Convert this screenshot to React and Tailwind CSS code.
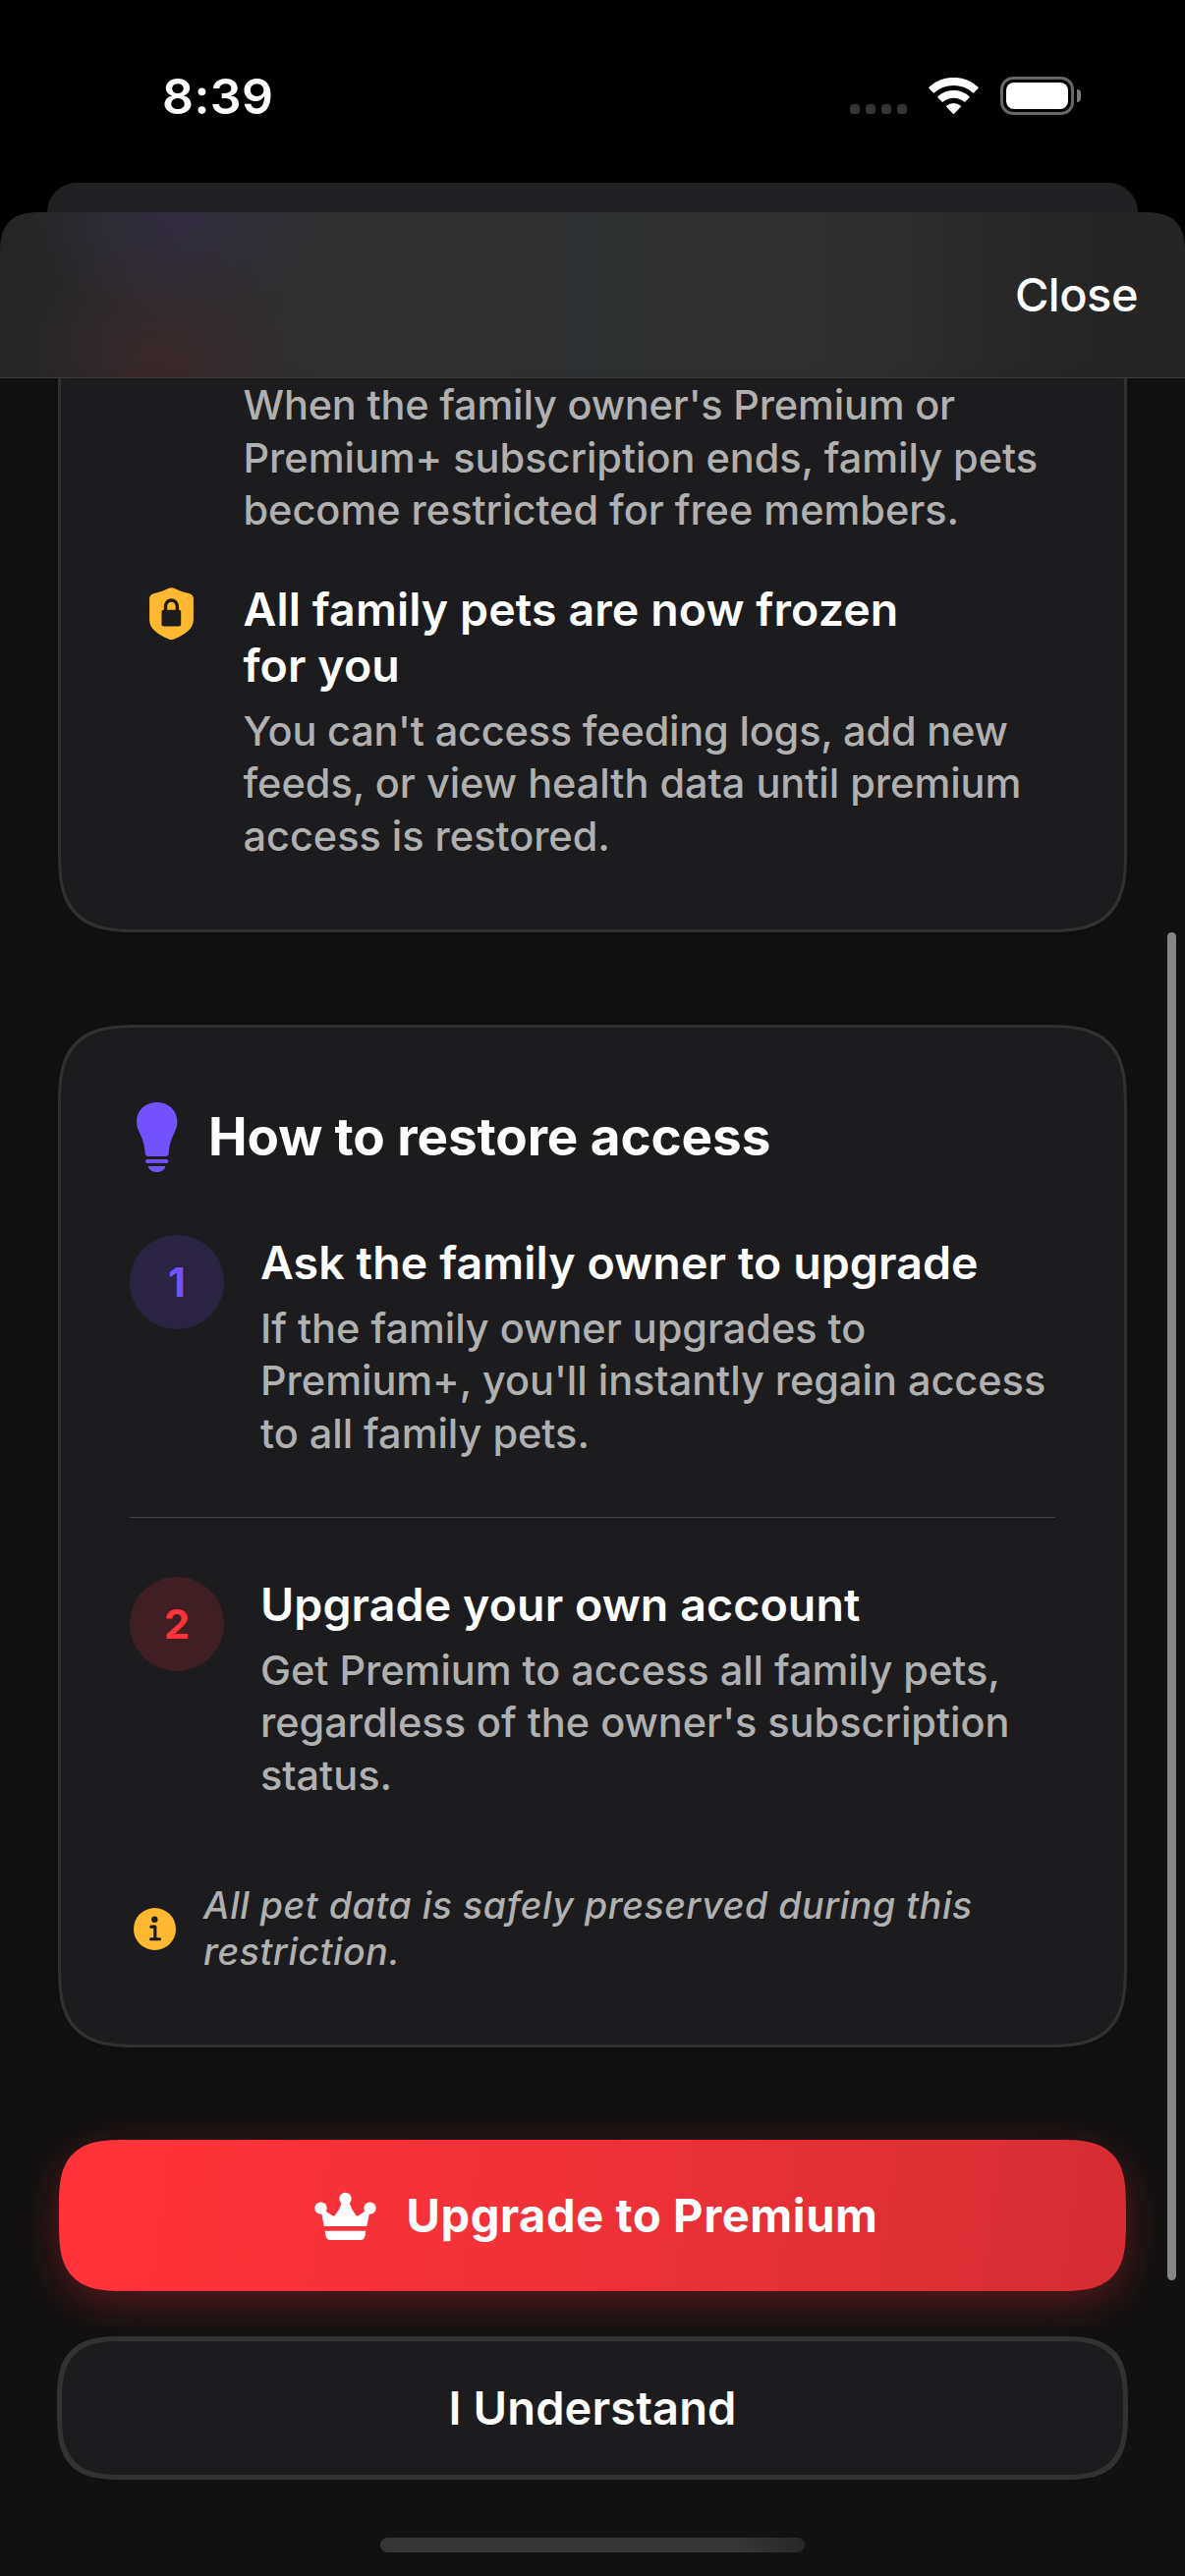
import React from "react";

function WifiIcon() {
  return (
    <svg width="51" height="38" viewBox="0 0 51 38" fill="#fff">
      <path d="M0.6 9.4A37.3 37.3 0 0 1 50.4 9.4Q51.2 10.1 50.6 10.8L46.1 15.4Q45.5 15.9 44.9 15.3A29.3 29.3 0 0 0 6.1 15.3Q5.5 15.9 4.9 15.4L0.4 10.8Q-0.2 10.1 0.6 9.4Z" />
      <path d="M9.6 18.9A24.3 24.3 0 0 1 41.4 18.9Q42.2 19.6 41.6 20.3L37.5 24.6Q36.9 25.2 36.2 24.6A16.7 16.7 0 0 0 14.8 24.6Q14.1 25.2 13.5 24.6L9.4 20.3Q8.8 19.6 9.6 18.9Z" />
      <path d="M18.4 28.5A11.3 11.3 0 0 1 32.6 28.5Q33.4 29.1 32.8 29.8L26.1 36.8Q25.5 37.5 24.9 36.8L18.2 29.8Q17.6 29.1 18.4 28.5Z" />
    </svg>
  );
}

function ShieldLockIcon() {
  return (
    <svg width="45" height="53.5" viewBox="0 0 134 160">
      <path
        fill="#ffb830"
        d="M57 3Q67 -2 77 3C92 11 108 15 122 19Q134 23 134 34V98C134 126 108 143 73 158Q67 161 61 158C26 143 0 126 0 98V34Q0 23 12 19C26 15 42 11 57 3Z"
      />
      <rect x="37" y="68" width="59" height="50" rx="6" fill="#1c1c1e" />
      <path d="M49 72V57A17.5 18 0 0 1 84.500 57V72" fill="none" stroke="#1c1c1e" strokeWidth="10" />
    </svg>
  );
}

function BulbIcon() {
  return (
    <svg width="41.500" height="71" viewBox="0 0 124 213" fill="#7351ff">
      <path d="M62 0C97 0 124 25 124 59C124 93 101 100 98 157Q97 165 90 165H34Q27 165 26 157C23 100 0 93 0 59C0 25 27 0 62 0Z" />
      <rect x="27" y="174" width="70" height="12" rx="6" />
      <path d="M35 195H88C86 206 76 213 61.500 213C47 213 37 206 35 195Z" />
    </svg>
  );
}

function InfoIcon() {
  return (
    <svg width="43" height="43" viewBox="0 0 128 128">
      <circle cx="64" cy="64" r="64" fill="#ffb830" />
      <circle cx="63.500" cy="35" r="9.500" fill="#1c1c1e" />
      <path
        d="M53 57H65V94M52 94.500H79"
        fill="none"
        stroke="#1c1c1e"
        strokeWidth="9.500"
        strokeLinecap="round"
        strokeLinejoin="round"
      />
    </svg>
  );
}

function CrownIcon() {
  return (
    <svg width="70" height="50" viewBox="-22 -5 210 150" fill="#fff">
      <circle cx="18.500" cy="48" r="18.500" />
      <circle cx="93.500" cy="18.500" r="18.500" />
      <circle cx="168.500" cy="48" r="18.500" />
      <path d="M20 60L28.500 103H159L167.500 60L152 58L133 71Q129 73 126 69Q112 52 105 30H83Q76 52 62 69Q58 73 54 71L35 58Z" />
      <path d="M31 117H156C154 137 150 145 139 145H48C37 145 33 137 31 117Z" />
    </svg>
  );
}

function StatusBar() {
  return (
    <div className="flex h-[186px] items-start justify-between pl-[165px] pr-[106px]">
      <div className="mt-[68px] text-[50px] leading-[61px] font-semibold tracking-[0.4px]">8:39</div>
      <div className="mt-[78px] flex h-[39px] items-center">
        <div className="mr-[22px] flex gap-1.5 self-end pb-px">
          <span className="size-2.5 rounded-[3.5px] bg-[#343434]" />
          <span className="size-2.5 rounded-[3.5px] bg-[#343434]" />
          <span className="size-2.5 rounded-[3.5px] bg-[#343434]" />
          <span className="size-2.5 rounded-[3.5px] bg-[#343434]" />
        </div>
        <WifiIcon />
        <div className="ml-[22px] h-[39px] w-[75px] rounded-[13px] border-[3px] border-[#666] p-[3px]">
          <div className="h-full rounded-[8px] bg-white" />
        </div>
        <div className="ml-[3px] h-[13px] w-1 rounded-r-full bg-[#7a7a7a]" />
      </div>
    </div>
  );
}

function Lines({ lines, className }) {
  return (
    <p className={className}>
      {lines.map((line) => (
        <span key={line} className="block whitespace-nowrap">
          {line}
        </span>
      ))}
    </p>
  );
}

const BODY = "text-[41.5px] leading-[53.5px] font-medium tracking-[-0.04px] text-[#b0b0b0]";
const TITLE = "text-[46.5px] leading-[57.5px] font-semibold tracking-[0.1px]";

function Step({ number, tone, title, lines }) {
  return (
    <div className="flex gap-9">
      <div className={`flex size-24 shrink-0 items-center justify-center rounded-full text-[41.5px] font-bold ${tone}`}>
        {number}
      </div>
      <div className="pl-px">
        <Lines lines={[title]} className={TITLE} />
        <Lines lines={lines} className={`mt-[11px] -mb-px ${BODY}`} />
      </div>
    </div>
  );
}

export default function App() {
  return (
    <div className="relative h-[2622px] w-[1206px] overflow-hidden bg-black font-[Inter,sans-serif] text-white">
      <StatusBar />
      <div className="mx-12 h-[30px] rounded-t-[30px] bg-[#202022]" />

      <div className="h-[2406px] overflow-hidden rounded-t-[32px] bg-[#111111] supports-[corner-shape:squircle]:rounded-t-[44px] supports-[corner-shape:squircle]:[corner-shape:superellipse(1.5)]">
        <header className="flex h-[169px] items-center justify-end border-b border-[#3c3c3d] bg-[radial-gradient(ellipse_150px_110px_at_180px_0px,rgba(53,46,72,0.75),rgba(53,46,72,0.35)_50%,transparent),radial-gradient(ellipse_150px_150px_at_165px_169px,rgba(62,38,42,0.8),rgba(62,38,42,0.35)_50%,transparent),linear-gradient(90deg,#242524_0%,#272728_6%,#2e2e2f_17%,#323233_28%,#303132_50%,#313131_68%,#2d2d2e_76%,#282829_84%,#252525_92%,#242524_100%)] pr-12">
          <button className="-mt-0.5 text-[47px] leading-[57px] font-medium tracking-[-0.5px]">Close</button>
        </header>

        <main className="px-[59px]">
          <section className="rounded-b-[61px] border-x-[3px] border-b-[3px] border-[#313132] bg-[#1c1c1e] px-[70px] pt-px pb-[68px] shadow-[0_8px_24px_rgba(0,0,0,0.1)] supports-[corner-shape:squircle]:rounded-b-[86px] supports-[corner-shape:squircle]:[corner-shape:superellipse(1.6)]">
            <Lines
              className={`ml-[115.5px] ${BODY}`}
              lines={[
                <span className="tracking-[-0.2px]">When the family owner's Premium or</span>,
                "Premium+ subscription ends, family pets",
                "become restricted for free members.",
              ]}
            />
            <div className="mt-[45px] flex gap-[30px]">
              <div className="mt-1.5 flex w-[85px] shrink-0 justify-center">
                <ShieldLockIcon />
              </div>
              <div className="pl-[0.5px]">
                <Lines className={TITLE} lines={["All family pets are now frozen", "for you"]} />
                <Lines
                  className={`mt-[11px] ${BODY}`}
                  lines={[
                    <span className="tracking-[-0.2px]">You can't access feeding logs, add new</span>,
                    "feeds, or view health data until premium",
                    "access is restored.",
                  ]}
                />
              </div>
            </div>
          </section>

          <section className="mt-[94px] h-[1041px] rounded-[61px] border-[3px] border-[#313132] bg-[#1c1c1e] px-[70px] pt-[75px] shadow-[0_8px_24px_rgba(0,0,0,0.1)] supports-[corner-shape:squircle]:rounded-[86px] supports-[corner-shape:squircle]:[corner-shape:superellipse(1.6)]">
            <div className="flex h-[72px] items-center gap-[31.5px] pl-[7px]">
              <BulbIcon />
              <h2 className="-mt-px text-[53px] leading-[64px] font-bold tracking-[-0.1px]">How to restore access</h2>
            </div>

            <div className="mt-16">
              <Step
                number="1"
                tone="bg-[#2a2442] text-[#7351ff]"
                title="Ask the family owner to upgrade"
                lines={[
                  "If the family owner upgrades to",
                  "Premium+, you'll instantly regain access",
                  "to all family pets.",
                ]}
              />
            </div>
            <div className="mt-[59px] mb-[60px] h-px bg-[#434345]" />
            <Step
              number="2"
              tone="bg-[#3f1f23] text-[#ff3339]"
              title="Upgrade your own account"
              lines={[
                "Get Premium to access all family pets,",
                "regardless of the owner's subscription",
                "status.",
              ]}
            />

            <div className="mt-[83px] flex items-center gap-7 pl-1">
              <InfoIcon />
              <Lines
                className="text-[37.5px] leading-[47px] font-medium tracking-[0.57px] text-[#b0b0b0] italic"
                lines={["All pet data is safely preserved during this", "restriction."]}
              />
            </div>
          </section>

          <button className="mx-px mt-[94px] flex h-[154px] w-[1086px] items-center justify-center gap-[31px] rounded-[50px] bg-[linear-gradient(98deg,#ff3339_8%,#ef3138_50%,#d52d32_100%)] shadow-[0_12px_44px_rgba(255,51,57,0.3)] supports-[corner-shape:squircle]:rounded-[70px] supports-[corner-shape:squircle]:[corner-shape:superellipse(1.6)]">
            <CrownIcon />
            <span className="-mt-0.5 text-[47px] leading-[57px] font-bold tracking-[0.6px]">Upgrade to Premium</span>
          </button>

          <button className="-mx-px mt-[46px] flex h-[146px] w-[1090px] items-center justify-center rounded-[50px] border-[5px] border-[#323233] bg-[#1c1c1e] pb-0.5 text-[47px] leading-[57px] font-semibold tracking-[0.1px] supports-[corner-shape:squircle]:rounded-[70px] supports-[corner-shape:squircle]:[corner-shape:superellipse(1.6)]">
            I Understand
          </button>
        </main>
      </div>

      <div className="absolute top-[949px] right-[9px] h-[1372px] w-[9px] rounded-full bg-[#868686]" />
      <div className="absolute bottom-6 left-[387px] h-[15px] w-[432px] rounded-full bg-[linear-gradient(90deg,#363636_85%,#272727)]" />
    </div>
  );
}
